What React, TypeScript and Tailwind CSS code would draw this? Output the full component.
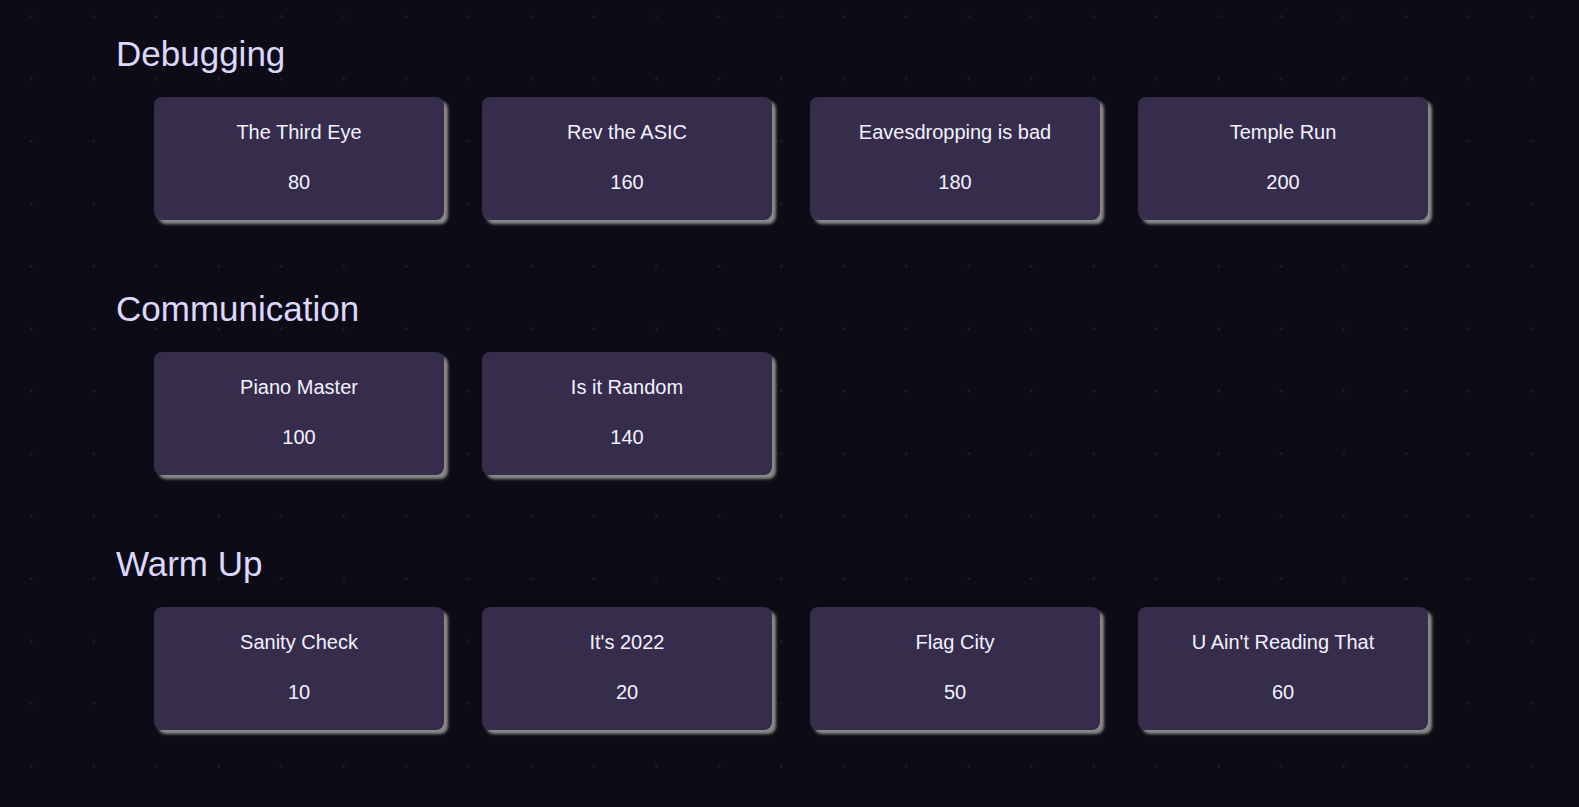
const sections = [
  {
    name: 'Debugging',
    challenges: [
      { title: 'The Third Eye', points: 80 },
      { title: 'Rev the ASIC', points: 160 },
      { title: 'Eavesdropping is bad', points: 180 },
      { title: 'Temple Run', points: 200 },
    ],
  },
  {
    name: 'Communication',
    challenges: [
      { title: 'Piano Master', points: 100 },
      { title: 'Is it Random', points: 140 },
    ],
  },
  {
    name: 'Warm Up',
    challenges: [
      { title: 'Sanity Check', points: 10 },
      { title: "It's 2022", points: 20 },
      { title: 'Flag City', points: 50 },
      { title: "U Ain't Reading That", points: 60 },
    ],
  },
];

export default function App() {
  return (
    <div
      className="min-h-screen bg-[#0d0c16] bg-[radial-gradient(circle,#ffffff14_1px,transparent_1.5px)] bg-[length:62.5px_62.5px] bg-[position:0_-15px] pl-[116px] pt-[34px] pb-10 font-['Liberation_Sans',Arial,sans-serif]"
    >
      {sections.map((section) => (
        <section key={section.name} className="mb-[69px]">
          <h2 className="text-[35px] leading-[40px] text-[#dcd7ff]">{section.name}</h2>
          <div className="mt-[23px] ml-[38px] grid grid-cols-[repeat(4,290px)] gap-x-[38px]">
            {section.challenges.map((c) => (
              <div
                key={c.title}
                className="h-[123px] rounded-lg bg-[#352d4b] pt-[24px] text-center text-[20px] leading-[23px] text-[#f3f1ff] shadow-[4px_4px_3px_#8a8a8a]"
              >
                <p>{c.title}</p>
                <p className="mt-[27px]">{c.points}</p>
              </div>
            ))}
          </div>
        </section>
      ))}
    </div>
  );
}
